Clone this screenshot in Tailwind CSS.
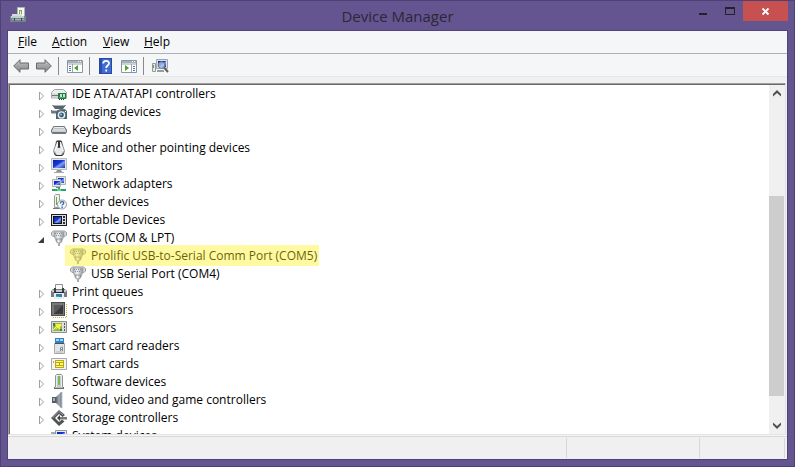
<!DOCTYPE html>
<html lang="en">
<head>
<meta charset="utf-8">
<meta name="viewport" content="width=device-width, initial-scale=1">
<title>Device Manager</title>
<script src="https://cdn.jsdelivr.net/npm/@tailwindcss/browser@4"></script>
</head>
<body class="h-screen overflow-hidden font-['Open_Sans','Noto_Sans',sans-serif] text-[12px] leading-[18px] text-black">

<svg class="absolute size-0" aria-hidden="true">
  <defs>
    <linearGradient id="steel" x2="1" y2="0"><stop stop-color="#9aa0a6"/><stop offset=".4" stop-color="#f4f6f7"/><stop offset="1" stop-color="#8b9196"/></linearGradient>
    <linearGradient id="screen" x2="1" y2="1"><stop stop-color="#0a1fb4"/><stop offset=".45" stop-color="#1838d8"/><stop offset=".6" stop-color="#7fa0f2"/><stop offset="1" stop-color="#1a2fc0"/></linearGradient>
    <linearGradient id="arrow" x2="0" y2="1"><stop stop-color="#c4c4c4"/><stop offset="1" stop-color="#858585"/></linearGradient>
    <linearGradient id="cone" x2="1" y2="0"><stop stop-color="#59626b"/><stop offset=".5" stop-color="#a5afb8"/><stop offset="1" stop-color="#69727c"/></linearGradient>
  </defs>
  <symbol id="closed" viewBox="0 0 7 10"><path d="M1.500 1v8L5.500 5z" fill="#fff" stroke="#a0a0a0"/></symbol>
  <symbol id="open" viewBox="0 0 7 10"><path d="M6 2v6H0z" fill="#3c3c3c"/></symbol>
  <symbol id="drive" viewBox="0 0 16 16"><path d="M3.500 3.500h9l3 3v5.500H.5V6.500z" fill="#eceded" stroke="#a3a5a7"/><path d="M1 7.500h14v4H1z" fill="#d3d5d6"/><path d="M1 9h6v1H1z" fill="#777"/><path d="M7 7h8v6H7z" fill="#247a48"/><path d="M9 8h2v3H9zM12 8h2v3h-2z" fill="#bfe5c7"/><path d="M8 11h6v1H8z" fill="#54a66f"/><path d="M8 13h1v1H8zm2 0h1v1h-1zm2 0h1v1h-1z" fill="#174b2d"/></symbol>
  <symbol id="imaging" viewBox="0 0 16 16"><path d="M1 1h14l-3 4H4z" fill="#59656e"/><path d="M2 1h12l-1 1H3z" fill="#a8b4bd"/><path d="M0 6h7l2-1h5l2 2v2H0z" fill="#70777d"/><path d="M1 6h5v1H1z" fill="#c9cfd4"/><path d="M5 8l2-1h2l1-1h3l1 1h2v8H5z" fill="#4d6473"/><path d="M0 9h5v1H1z" fill="#b1b8bd"/><circle cx="10.500" cy="11" r="3.800" fill="#e6f1f8"/><circle cx="10.500" cy="11" r="2.400" fill="#375a73"/><circle cx="10" cy="10.500" r="1" fill="#9ac4e0"/><path d="M14 7h1v1h-1z" fill="#fff"/></symbol>
  <symbol id="keyboard" viewBox="0 0 16 16"><path d="M2.500 4h11L16 8v2l-1.500 2h-13L0 10V8z" fill="#70777d"/><path d="M3 5h10l2 4H1z" fill="#eceeef"/><path d="M3.500 6.500h9M2.500 8h11" stroke="#92989d" stroke-dasharray="1 1"/><path d="M1 9h14v1H1z" fill="#c9ccce"/></symbol>
  <symbol id="mouse" viewBox="0 0 16 16"><path d="M5 1l1.500-1h3L11 1l1 4 2 6-1 3-2 2H5l-2-2-1-3 2-6z" fill="#8b8e90"/><path d="M5.500 1h5l1 4.500L8 8 4.500 5.500z" fill="#3a3d40"/><path d="M6 2h1v4l-1 3-2 3-1-1zM10 2H9v4l1 3 2 3 1-1z" fill="#f6f6f6"/><path d="M6 8h4l2 4-2 3H6l-2-3z" fill="#e8e9ea"/><path d="M7 1h2v6H7zM3 13l2 2h6l2-2v1l-2 2H5l-2-2z" fill="#303336"/></symbol>
  <symbol id="monitor" viewBox="0 0 16 16"><path d="M.5.500h15v11H.5z" fill="#e3e4e5" stroke="#b8bbbd"/><path d="M2 2h12v8H2z" fill="url(#screen)"/><path d="M6 12h4l1 2H5z" fill="#8f9396"/><path d="M3 14h10v1H3z" fill="#a6a9ac"/></symbol>
  <symbol id="network" viewBox="0 0 16 16"><path d="M5.500.5h9v8h-9z" fill="#e5e7e9" stroke="#aeb2b5"/><path d="M7 2h6v5H7z" fill="url(#screen)"/><path d="M1.500 3.500h8v7h-8z" fill="#e5e7e9" stroke="#aeb2b5"/><path d="M3 5h6v4H3z" fill="url(#screen)"/><path d="M5 11h4v1H5z" fill="#7d8286"/><path d="M7 11h2v2h6v2H1v-2h6z" fill="#26a864"/><path d="M6 13h4v2H6z" fill="#5fd096"/></symbol>
  <symbol id="other" viewBox="0 0 16 16"><path d="M3.500 1.500l1-1h4v13h-5z" fill="#f1f1f0" stroke="#999"/><path d="M5.500 3v8" stroke="#68ad36"/><path d="M2 14h7v1H2z" fill="#777"/><circle cx="11" cy="10.500" r="4.500" fill="#f3f7fb" stroke="#8e9bab"/><path d="M9.400 9.500q0-1.800 1.700-1.800t1.600 1.500c0 1-1.600 1.100-1.600 2.400M11.100 12.600V14" fill="none" stroke="#3a61a5" stroke-width="1.300"/></symbol>
  <symbol id="portable" viewBox="0 0 16 16"><path d="M0 2h16v12H0z" fill="#1c1c1e"/><path d="M1 3h14v10H1z" fill="#dcdddf"/><path d="M2 4h9v8H2z" fill="#111"/><path d="M3 5h7v6H3z" fill="url(#screen)"/><path d="M12 4h2v2h-2zm0 3h2v2h-2zm0 3h2v2h-2z" fill="#2e2e30"/></symbol>
  <symbol id="port" viewBox="0 0 16 16"><path d="M.5 2.500l2-1.500h11l2 1.500V5l-1.500 1.500H2L.5 5z" fill="#d6dadd" stroke="#969ca1"/><path d="M3 2h10v4l-1.500 3.500h-7L3 6z" fill="url(#steel)" stroke="#9da3a8" stroke-width=".7"/><path d="M4 3.500h8M5 5.500h6" stroke="#8d949a" stroke-dasharray="1 1"/><path d="M5 9h6v2l-1.500 2h-3L5 11z" fill="url(#steel)" stroke="#858b91" stroke-width=".8"/><path d="M7 13h2v3H7z" fill="#a5aaae"/></symbol>
  <symbol id="printer" viewBox="0 0 16 16"><path d="M4.500.5h7v5h-7z" fill="#fafafa" stroke="#8a8f93"/><path d="M2 5h12l2 2v6H0V7z" fill="#777c81"/><path d="M1 6h14v2H1z" fill="#c6c9cb"/><path d="M3 4h2v4H3zm8 0h2v4h-2z" fill="#393d41"/><path d="M3 9h10v6H3z" fill="#e7eff6"/><path d="M5 10h6v3H5z" fill="#3979b7"/><path d="M5 12h3v1H5z" fill="#4bb273"/><path d="M3 8h10v1H3z" fill="#24272a"/></symbol>
  <symbol id="processor" viewBox="0 0 16 16"><path d="M2 15.500h13M15.500 2v13" stroke="#d3a442" stroke-dasharray="1 1"/><path d="M0 0h14v14H0z" fill="#4c4c4e"/><path d="M1 1h12v12H1z" fill="#77797b"/><path d="M3 3h9v9H3z" fill="#39393b"/><path d="M3 3h9l-9 9z" fill="#58595b"/></symbol>
  <symbol id="sensor" viewBox="0 0 16 16"><path d="M.5 1.500h15v11H.5z" fill="#dadcdd" stroke="#8c9093"/><path d="M2 3h9v8H2z" fill="#91ba43"/><path d="M4 4h6l1 1-2 2v3L7 8l-4 2 3-3z" fill="#f8ef4b"/><path d="M2 3h2v3H2zM9 9h2v2H9z" fill="#4a8033"/><path d="M2 10l4-4" stroke="#fff17a"/><path d="M13 3h1v2h-1zm0 3h1v2h-1zm0 3h1v2h-1z" fill="#4f555a"/></symbol>
  <symbol id="reader" viewBox="0 0 16 16"><path d="M4 0h9v5H4z" fill="#2f83c6"/><path d="M5 1h3v2H5zm4 0h3v2H9z" fill="#a3d2f3"/><path d="M3.500 5.500h10v10h-10z" fill="#e2e4e6" stroke="#a4a8ab"/><path d="M4 5h9v1H4z" fill="#4a5055"/><path d="M9.500 13v-3l1-1h1v4M9.500 11.500h2" fill="none" stroke="#858a8e"/><path d="M5 14h7" stroke="#b5b8ba"/></symbol>
  <symbol id="card" viewBox="0 0 16 16"><path d="M.5 2.500h15v11H.5z" fill="#f4f4f3" stroke="#aaa"/><path d="M4 4h9v8H4z" fill="#b7a914"/><path d="M5 5h7v1H5zM5 7h3v2H5zm4 0h3v2H9zm-4 3h7v1H5z" fill="#fff578"/><path d="M2 5h1v2H2z" fill="#aaa"/></symbol>
  <symbol id="software" viewBox="0 0 16 16"><path d="M4.500 1.500l1-1h5l1 1v12h-7z" fill="#ebecec" stroke="#919496"/><path d="M6 2h4v11H6z" fill="#c8cccb"/><path d="M8 2v9" stroke="#65b32e" stroke-width="1.500"/><path d="M3 13h10v2H3z" fill="#6b6e70"/><path d="M4 13h8v1H4z" fill="#bbb"/></symbol>
  <symbol id="sound" viewBox="0 0 16 16"><path d="M1 5h4v6H1z" fill="#545d65"/><path d="M2 6h2v3H2z" fill="#a4afb8"/><path d="M5 5l5-5h1v16h-1l-5-5z" fill="url(#cone)"/><path d="M11 0v16" stroke="#c5cbd0"/></symbol>
  <symbol id="storage" viewBox="0 0 16 16"><path d="M8 0l6 5-2.500 2L8 4 4 8l4 4 3-2.500 2.500 2L8 16 0 8z" fill="#505254"/><path d="M8 1.500l4 3.500M1.500 8L8 1.500" stroke="#a0a2a4" fill="none"/><path d="M8 7h8v2.500H8z" fill="#77797b"/><path d="M9 5v6L6 8z" fill="#3f4143"/></symbol>
  <symbol id="system" viewBox="0 0 16 16"><path d="M4.500 2.500h11v9h-11z" fill="#e7e9eb" stroke="#929699"/><path d="M6 4h8v6H6z" fill="url(#screen)"/><path d="M0 4h4v9H0z" fill="#a9adb0"/></symbol>
</svg>

<main class="flex h-full flex-col border border-[#4d4175] bg-[#645591] px-1.5 pb-1.5">
  <header class="relative flex h-[29px] shrink-0 items-center justify-center">
    <svg class="absolute left-[3px] top-[6px] size-4" viewBox="0 0 16 16" aria-hidden="true">
      <path d="M7.500.5h7v9h-7z" fill="#f6f6f4" stroke="#b0b2b3"/><path d="M9 3h3v5H9z" fill="#78b33f"/><path d="M10 4h1v3h-1z" fill="#e2f1d3"/>
      <path d="M2 7h10v2H2z" fill="#d8dadb"/><path d="M0 9h15l1 1v5H0z" fill="#75848c"/><path d="M1 9h13v2H1z" fill="#c1cbd0"/><path d="M2 12h12v1H2z" fill="#a5b1b8"/><path d="M4 11h1v3H4zm7 0h1v3h-1z" fill="#3b464d"/>
    </svg>
    <h1 class="text-[15px] leading-5 text-[#2b2735]">Device Manager</h1>
    <div class="absolute right-0 top-0 flex h-5">
      <button class="flex w-[27px] items-center justify-center" aria-label="Minimize"><svg class="h-5 w-[27px]" viewBox="0 0 27 20"><path d="M10 12h8v2h-8z" fill="#242129"/></svg></button>
      <button class="flex w-[27px] items-center justify-center" aria-label="Maximize"><svg class="h-5 w-[27px]" viewBox="0 0 27 20"><path d="M9 6h10v8H9zm1 2v5h8V8z" fill="#242129" fill-rule="evenodd"/></svg></button>
      <button class="flex w-[45px] items-center justify-center bg-[#c75050]" aria-label="Close"><svg class="h-5 w-[45px]" viewBox="0 0 45 20"><path d="M19.500 7.500l6 6m0-6l-6 6" stroke="#fff" stroke-width="1.800"/></svg></button>
    </div>
  </header>

  <div class="flex min-h-0 flex-1 flex-col border border-[#4f4379] bg-[#f5f6f7]">
    <nav class="flex h-[23px] shrink-0 items-center border-b border-[#aeb0b3] pl-[10px]" aria-label="Menu bar">
      <button class="w-[34px] text-left"><u>F</u>ile</button>
      <button class="w-[51px] text-left"><u>A</u>ction</button>
      <button class="w-[41px] text-left"><u>V</u>iew</button>
      <button class="text-left"><u>H</u>elp</button>
    </nav>

    <div class="flex h-[23px] shrink-0 items-center border-b border-[#e6e7e8] pt-0.5 pl-[5px]" role="toolbar" aria-label="Toolbar">
      <button aria-label="Back"><svg class="h-4 w-[16px]" viewBox="0 0 16 16"><path d="M.7 8L7 1.700V5h8.500v6H7v3.300z" fill="url(#arrow)" stroke="#6b6b6b"/></svg></button>
      <button class="ml-[7px]" aria-label="Forward"><svg class="h-4 w-[16px]" viewBox="0 0 16 16"><path d="M15.300 8L9 1.700V5H.5v6H9v3.300z" fill="url(#arrow)" stroke="#6b6b6b"/></svg></button>
      <span class="ml-[6px] h-[18px] w-px bg-[#87898c]"></span>
      <button class="ml-[8px]" aria-label="Show or hide console tree"><svg class="h-4 w-[16px]" viewBox="0 0 16 16"><path d="M.5 2.500h15v12H.5z" fill="#fff" stroke="#8b959f"/><path d="M1 3h14v2H1z" fill="#a5b0bb"/><path d="M11 3h1v1h-1zm2 0h1v1h-1z" fill="#fff"/><path d="M1 6h14M5.500 6v8" stroke="#9aa5af"/><path d="M2 8h2v1H2zm0 2h2v1H2zm0 2h2v1H2z" fill="#477db9"/><path d="M11 7v6l-4-3z" fill="#47a52e"/></svg></button>
      <span class="ml-[6px] h-[18px] w-px bg-[#87898c]"></span>
      <button class="ml-[9px]" aria-label="Help"><svg class="h-4 w-[13px]" viewBox="0 0 13 16"><path d="M0 0h13v16H0z" fill="#2449a8"/><path d="M1 1h11v14H1z" fill="#416bd0"/><path d="M1 1h2v14H1z" fill="#294fae"/><path d="M4.200 5.500C4.200 2 10 2 10 5.200 10 7.500 7.200 7.500 7.200 10M7.200 11.500v2" fill="none" stroke="#fff" stroke-width="1.800"/></svg></button>
      <button class="ml-[9px]" aria-label="Show or hide action pane"><svg class="h-4 w-[16px]" viewBox="0 0 16 16"><path d="M.5 2.500h15v12H.5z" fill="#fff" stroke="#8b959f"/><path d="M1 3h14v2H1z" fill="#a5b0bb"/><path d="M11 3h1v1h-1zm2 0h1v1h-1z" fill="#fff"/><path d="M1 6h14M10.500 6v8" stroke="#9aa5af"/><path d="M12 8h2v1h-2zm0 2h2v1h-2zm0 2h2v1h-2z" fill="#477db9"/><path d="M4 7v6l4-3z" fill="#47a52e"/></svg></button>
      <span class="ml-[6px] h-[18px] w-px bg-[#87898c]"></span>
      <button class="ml-[8px]" aria-label="Scan for hardware changes"><svg class="h-4 w-[17px]" viewBox="0 0 17 16"><path d="M.5 5.500h3v8h-3z" fill="#e5e7e8" stroke="#94989b"/><path d="M1 7h1v3H1z" fill="#5aaa39"/><path d="M4.500 1.500h11v9h-11z" fill="#dddfe1" stroke="#a3a6a9"/><path d="M6 3h8v6H6z" fill="url(#screen)"/><path d="M5 12h7v2H5z" fill="#999da0"/><circle cx="9.500" cy="7" r="3.300" fill="#b8d4f4" fill-opacity=".7" stroke="#6e7780"/><path d="M12 9.500l4 4.500" stroke="#596169" stroke-width="2"/></svg></button>
    </div>

    <div class="flex min-h-0 flex-1 bg-[#f0f0f0] pt-1.5 pr-px">
    <div class="flex min-w-0 flex-1 border border-[#e3e3e3] border-t-[#a0a0a0] border-l-[#a0a0a0] bg-white">
      <ul class="min-w-0 flex-1 overflow-hidden border-t border-l border-[#696969] pl-7 [&_button]:w-[13px] [&_button]:shrink-0 [&_button>svg]:h-[10px] [&_button>svg]:w-[7px] [&_button>svg]:translate-y-0.5 [&_li]:flex [&_li]:h-[18px] [&_li]:items-center [&_li]:whitespace-nowrap [&_li>svg]:mr-[5px] [&_li>svg]:size-4 [&_li>svg]:shrink-0" aria-label="Devices">
        <li><button aria-label="Expand"><svg><use href="#closed"/></svg></button><svg><use href="#drive"/></svg>IDE ATA/ATAPI controllers</li>
        <li><button aria-label="Expand"><svg><use href="#closed"/></svg></button><svg><use href="#imaging"/></svg>Imaging devices</li>
        <li><button aria-label="Expand"><svg><use href="#closed"/></svg></button><svg><use href="#keyboard"/></svg>Keyboards</li>
        <li><button aria-label="Expand"><svg><use href="#closed"/></svg></button><svg><use href="#mouse"/></svg>Mice and other pointing devices</li>
        <li><button aria-label="Expand"><svg><use href="#closed"/></svg></button><svg><use href="#monitor"/></svg>Monitors</li>
        <li><button aria-label="Expand"><svg><use href="#closed"/></svg></button><svg><use href="#network"/></svg>Network adapters</li>
        <li><button aria-label="Expand"><svg><use href="#closed"/></svg></button><svg><use href="#other"/></svg>Other devices</li>
        <li><button aria-label="Expand"><svg><use href="#closed"/></svg></button><svg><use href="#portable"/></svg>Portable Devices</li>
        <li><button aria-label="Collapse"><svg><use href="#open"/></svg></button><svg><use href="#port"/></svg>Ports (COM &amp; LPT)</li>
        <li class="relative ml-8 w-fit"><svg><use href="#port"/></svg>Prolific USB-to-Serial Comm Port (COM5)<span class="absolute -left-[5px] -right-0.5 -top-0.5 -bottom-px bg-[#fff014]/40"></span></li>
        <li class="ml-8"><svg><use href="#port"/></svg>USB Serial Port (COM4)</li>
        <li><button aria-label="Expand"><svg><use href="#closed"/></svg></button><svg><use href="#printer"/></svg>Print queues</li>
        <li><button aria-label="Expand"><svg><use href="#closed"/></svg></button><svg><use href="#processor"/></svg>Processors</li>
        <li><button aria-label="Expand"><svg><use href="#closed"/></svg></button><svg><use href="#sensor"/></svg>Sensors</li>
        <li><button aria-label="Expand"><svg><use href="#closed"/></svg></button><svg><use href="#reader"/></svg>Smart card readers</li>
        <li><button aria-label="Expand"><svg><use href="#closed"/></svg></button><svg><use href="#card"/></svg>Smart cards</li>
        <li><button aria-label="Expand"><svg><use href="#closed"/></svg></button><svg><use href="#software"/></svg>Software devices</li>
        <li><button aria-label="Expand"><svg><use href="#closed"/></svg></button><svg><use href="#sound"/></svg>Sound, video and game controllers</li>
        <li><button aria-label="Expand"><svg><use href="#closed"/></svg></button><svg><use href="#storage"/></svg>Storage controllers</li>
        <li><button aria-label="Expand"><svg><use href="#closed"/></svg></button><svg><use href="#system"/></svg>System devices</li>
      </ul>
      <div class="flex w-4 shrink-0 flex-col border-t border-[#696969] bg-[#f0f0f0]">
        <button class="flex h-[17px] shrink-0 items-center justify-center" aria-label="Scroll up"><svg class="h-[7px] w-2" viewBox="0 0 8 7"><path d="M4 0l4 4v2.500L4 3 0 6.500V4z" fill="#505050"/></svg></button>
        <div class="flex min-h-0 flex-1 flex-col">
          <div class="flex-[94]"></div>
          <div class="mr-px flex-[200] bg-[#cdcdcd]"></div>
          <div class="flex-[21]"></div>
        </div>
        <button class="flex h-[17px] shrink-0 items-center justify-center" aria-label="Scroll down"><svg class="h-[7px] w-2" viewBox="0 0 8 7"><path d="M4 7L0 3V.5L4 4 8 .5V3z" fill="#505050"/></svg></button>
      </div>
    </div>
    </div>

    <footer class="mt-px flex h-[23px] shrink-0 border-t border-[#d7d7d7] bg-[#f0f0f0] py-px pr-[2px]">
      <div class="flex-1 border-r border-[#d7d7d7]"></div>
      <div class="w-[133px] border-r border-[#d7d7d7]"></div>
      <div class="w-[85px] border-r border-[#d7d7d7]"></div>
    </footer>
  </div>
</main>
</body>
</html>
